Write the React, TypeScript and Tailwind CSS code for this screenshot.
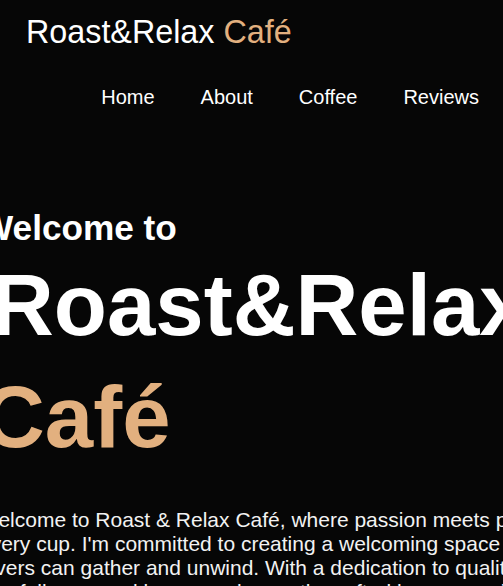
import React from "react";

export default function App() {
  const font = { fontFamily: '"Liberation Sans", Arial, sans-serif' };
  return (
    <div
      className="h-screen w-full overflow-hidden bg-[#060606] text-white"
      style={font}
    >
      <header className="flex flex-col">
        <div className="pl-[26px] pt-[14px] text-[32.3px] leading-[37px] text-white">
          Roast&amp;Relax <span className="text-[#e2b07f]">Café</span>
        </div>
        <nav className="mt-[35px] flex justify-end pr-px">
          {["Home", "About", "Coffee", "Reviews"].map((l) => (
            <a
              key={l}
              href="#"
              className="px-[23px] text-[20px] leading-[23px] text-white"
            >
              {l}
            </a>
          ))}
        </nav>
      </header>

      <section className="-ml-5 mt-[99px] w-[670px]">
        <h2 className="whitespace-nowrap text-[35.2px] font-bold leading-[40px] text-white">
          Welcome to
        </h2>
        <h1 className="mt-px whitespace-nowrap text-[87px] font-bold leading-[112px]">
          <span className="ml-[11px] text-white">Roast&amp;Relax</span>
          <br />
          <span className="ml-[2px] text-[#e2b07f]">Café</span>
        </h1>
        <p className="-ml-px mt-[35px] text-[21px] leading-[24px] text-[#f2f2f2]">
          Welcome to Roast &amp; Relax Café, where passion meets perfection in
          every cup. I'm committed to creating a welcoming space where coffee
          lovers can gather and unwind. With a dedication to quality, I offer
          carefully sourced beans and expertly crafted beverages in a cozy,
          relaxing atmosphere.
        </p>
      </section>
    </div>
  );
}
